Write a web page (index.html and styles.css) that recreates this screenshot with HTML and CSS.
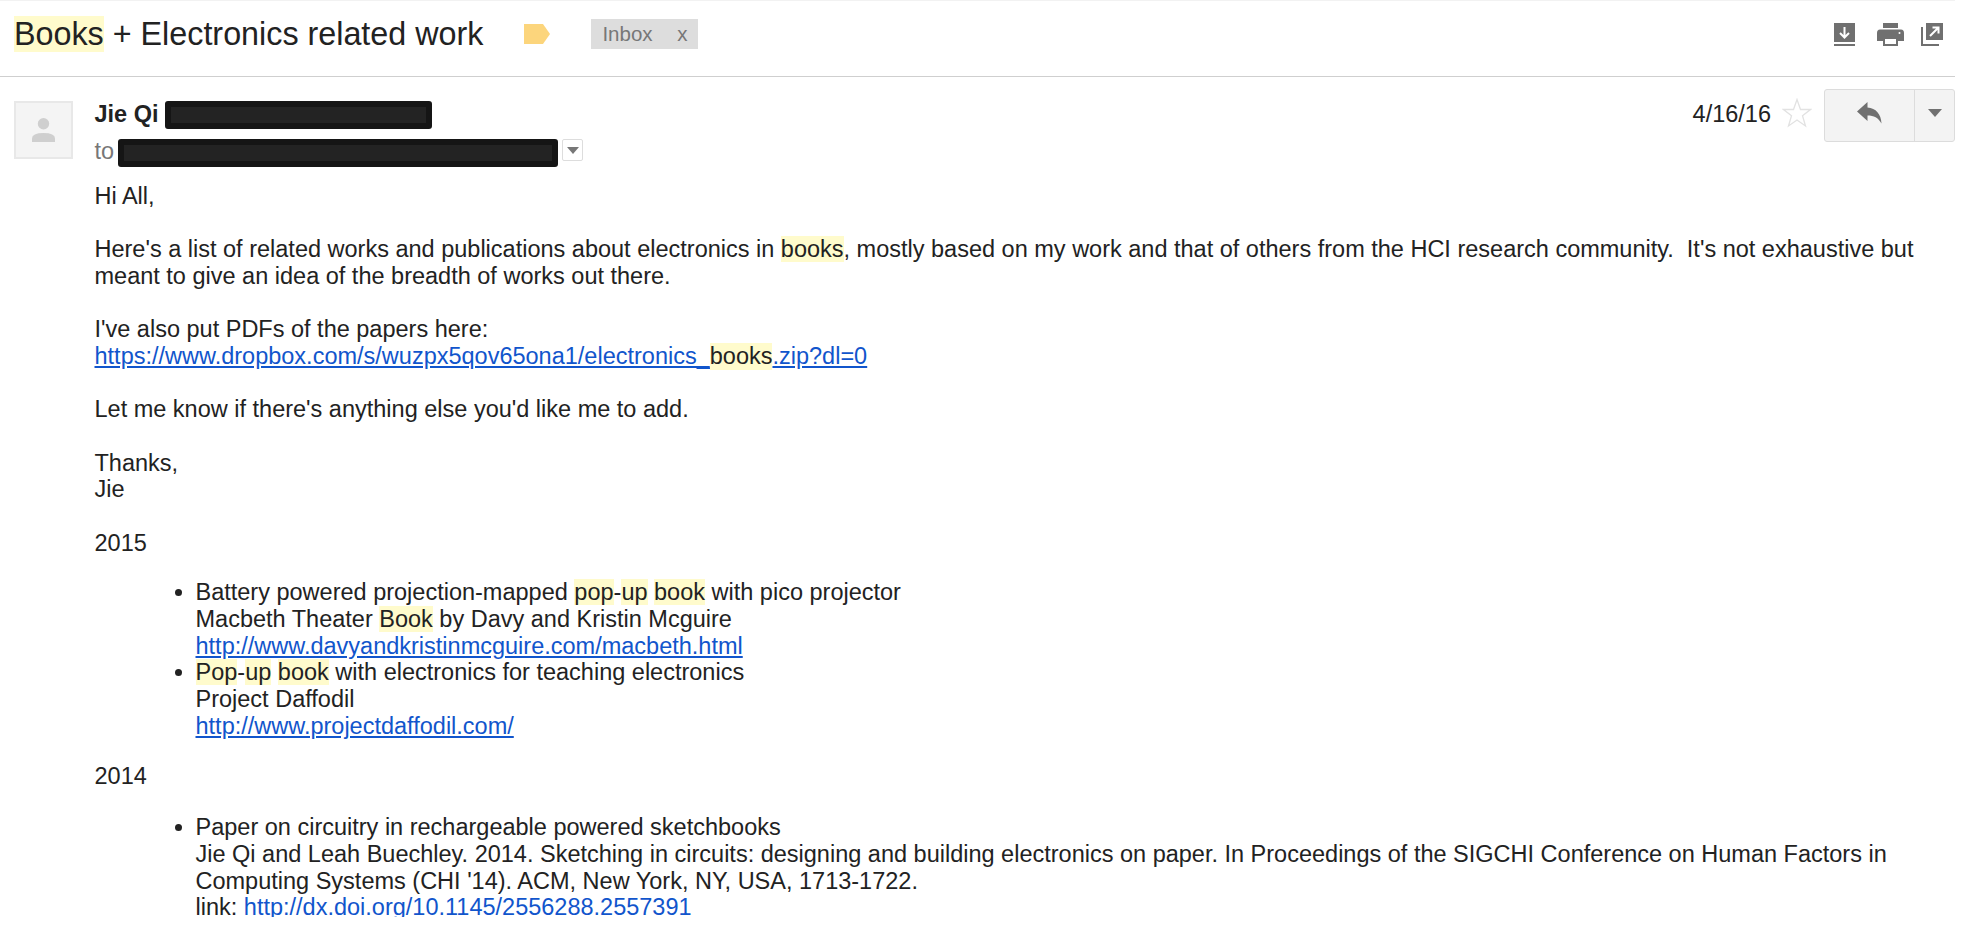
FILE: index.html
```html
<!DOCTYPE html>
<html lang="en">
<head>
  <meta charset="UTF-8" />
  <title>Books + Electronics related work</title>
  <link rel="stylesheet" href="styles.css">
</head>
<body>
  <div class="page">
    <header class="subject-bar">
      <h1 class="subject"><span class="hl">Books</span> + Electronics related work</h1>
      <svg class="label-icon" width="26" height="20" viewBox="0 0 26 20"><path d="M0 0H19L26 10L19 20H0Z" fill="#fcd57c"/></svg>
      <span class="chip"><span>Inbox</span><span>x</span></span>
      <div class="top-icons">
        <svg class="icon-download" width="21" height="23" viewBox="0 0 21 23"><path d="M0 0H21V19H0Z" fill="#707070"/><path d="M0 21H21V23H0Z" fill="#707070"/><path d="M10.500 4V14M6 10L10.500 14.500L15 10" fill="none" stroke="#fff" stroke-width="2"/></svg>
        <svg class="icon-print" width="27" height="23" viewBox="0 0 27 23"><path d="M6 0H21V5H6Z" fill="#707070"/><path d="M3 6.500H24Q27 6.500 27 10V18H21V14H6V18H0V10Q0 6.500 3 6.500Z" fill="#707070"/><path d="M7 15H20V22H7Z" fill="none" stroke="#707070" stroke-width="2"/><circle cx="22.500" cy="10" r="1" fill="#fff"/></svg>
        <svg class="icon-popout" width="22" height="23" viewBox="0 0 22 23"><path d="M5 0H22V17H5Z" fill="#707070"/><path d="M1 4V22H18" fill="none" stroke="#707070" stroke-width="2"/><path d="M9 13L17 5M11.500 4.500H17.500V10.500" fill="none" stroke="#fff" stroke-width="2"/></svg>
      </div>
    </header>

    <section class="message">
      <div class="avatar">
        <svg width="23" height="24" viewBox="0 0 23 24"><circle cx="11.500" cy="5.700" r="5.700" fill="#cfcfcf"/><path d="M0 24V20.500Q0 15 11.500 15Q23 15 23 20.500V24Z" fill="#cfcfcf"/></svg>
      </div>
      <div class="message-main">
        <div class="message-head">
          <div class="people">
            <div class="from"><strong class="from-name">Jie Qi</strong><span class="redact redact-from"></span></div>
            <div class="to"><span class="to-word">to</span><span class="redact redact-to"></span>
              <span class="details-btn"><svg width="12" height="7" viewBox="0 0 12 7"><path d="M0 0H12L6 7Z" fill="#777"/></svg></span>
            </div>
          </div>
          <div class="actions">
            <span class="date">4/16/16</span>
            <svg class="star" width="30" height="30" viewBox="0 0 30 30"><path d="M15 1.500L18.500 11.500H28.500L20.500 17.800L23.500 28L15 22L6.500 28L9.500 17.800L1.500 11.500H11.500Z" fill="#fff" stroke="#e2e2e2" stroke-width="1.300"/></svg>
            <div class="reply-group">
              <span class="reply-btn"><svg width="25" height="22" viewBox="0 0 25 22"><path d="M0 9.500L10.500 0V5.500C19 6 24 12 24.500 21.500C21 15.500 17 13.500 10.500 13.500V19Z" fill="#707070"/></svg></span>
              <span class="more-btn"><svg width="14" height="8" viewBox="0 0 14 8"><path d="M0 0H14L7 8Z" fill="#707070"/></svg></span>
            </div>
          </div>
        </div>

        <div class="body-text">
          <p>Hi All,</p>
          <p>Here's a list of related works and publications about electronics in <span class="hl">books</span>, mostly based on my work and that of others from the HCI research community.&nbsp; It's not exhaustive but meant to give an idea of the breadth of works out there.</p>
          <p>I've also put PDFs of the papers here:<br><a href="#">https://www.dropbox.com/s/wuzpx5qov65ona1/electronics_<span class="hl hl-link">books</span>.zip?dl=0</a></p>
          <p>Let me know if there's anything else you'd like me to add.</p>
          <p>Thanks,<br>Jie</p>
          <p class="year">2015</p>
          <ul>
            <li>Battery powered projection-mapped <span class="hl">pop</span>-<span class="hl">up</span> <span class="hl">book</span> with pico projector<br>Macbeth Theater <span class="hl">Book</span> by Davy and Kristin Mcguire<br><a href="#">http://www.davyandkristinmcguire.com/macbeth.html</a></li>
            <li><span class="hl">Pop</span>-<span class="hl">up</span> <span class="hl">book</span> with electronics for teaching electronics<br>Project Daffodil<br><a href="#">http://www.projectdaffodil.com/</a></li>
          </ul>
          <p class="year year-second">2014</p>
          <ul>
            <li>Paper on circuitry in rechargeable powered sketchbooks<br>Jie Qi and Leah Buechley. 2014. Sketching in circuits: designing and building electronics on paper. In Proceedings of the SIGCHI Conference on Human Factors in Computing Systems (CHI '14). ACM, New York, NY, USA, 1713-1722.<br>link: <a href="#">http://dx.doi.org/10.1145/2556288.2557391</a></li>
          </ul>
        </div>
      </div>
    </section>
  </div>
</body>
</html>
```

FILE: styles.css
```css
body {
  margin: 0;
  background: #fff;
  color: #222;
  font-family: "Liberation Sans", Arial, sans-serif;
  font-size: 23.500px;
  overflow: hidden;
}

.page {
  width: 1955px;
  height: 917px;
  overflow: hidden;
  border-top: 1px solid #f2f2f2;
  box-sizing: border-box;
}

.hl {
  background: #fffbcc;
}

/* subject row */
.subject-bar {
  display: flex;
  align-items: center;
  height: 66px;
  padding: 0 12px 9px 14px;
  border-bottom: 1px solid #cfcfcf;
}

.subject {
  margin: 0;
  font-size: 32.300px;
  font-weight: normal;
}

.label-icon {
  margin-left: 41px;
}

.chip {
  display: flex;
  justify-content: space-between;
  width: 107px;
  height: 30px;
  margin-left: 41px;
  padding: 0 11px;
  box-sizing: border-box;
  background: #ddd;
  color: #777;
  font-size: 20.500px;
  line-height: 30px;
}

.top-icons {
  display: flex;
  align-items: center;
  margin-left: auto;
}

.icon-print {
  margin: 0 17px 0 22px;
}

/* message */
.message {
  display: flex;
  padding: 12px 0 0 14px;
}

.avatar {
  display: flex;
  align-items: center;
  justify-content: center;
  flex: none;
  width: 59px;
  height: 58px;
  margin-top: 12px;
  box-sizing: border-box;
  background: #f4f4f4;
  border: 2px solid #e8e8e8;
}

.message-main {
  flex: 1;
  margin-left: 21.500px;
  min-width: 0;
}

.message-head {
  display: flex;
  justify-content: space-between;
  height: 93.500px;
}

.people {
  padding-top: 12px;
}

.from,
.to {
  display: flex;
  align-items: center;
  height: 28px;
}

.to {
  margin-top: 10px;
  color: #777;
}

.from-name {
  margin-bottom: 2px;
}

.to-word {
  margin-bottom: 4px;
}

.redact {
  box-sizing: border-box;
  height: 28px;
  background: #232323;
  border: 6px solid #151515;
  border-radius: 3px;
}

.redact-from {
  width: 267px;
  margin-left: 6px;
}

.redact-to {
  width: 440px;
  margin-left: 4px;
}

.details-btn {
  display: flex;
  align-items: center;
  justify-content: center;
  align-self: flex-start;
  width: 21px;
  height: 22px;
  margin-left: 4px;
  box-sizing: border-box;
  background: #fff;
  border: 1px solid #ddd;
  border-radius: 2px;
}

.actions {
  display: flex;
  align-items: flex-start;
}

.date {
  margin-top: 12px;
}

.star {
  margin: 9px 0 0 11px;
}

.reply-group {
  display: flex;
  height: 53px;
  margin-left: 12px;
  box-sizing: border-box;
  background: #f3f3f3;
  border: 1px solid #dcdcdc;
  border-radius: 3px;
}

.reply-btn,
.more-btn {
  display: flex;
  align-items: center;
  justify-content: center;
  padding-bottom: 5px;
  box-sizing: border-box;
}

.reply-btn {
  width: 90px;
  border-right: 1px solid #dcdcdc;
}

.more-btn {
  width: 39px;
}

/* mail text */
.body-text {
  line-height: 26.700px;
}

.body-text p {
  margin: 0 0 26.700px;
}

.body-text .year {
  margin-bottom: 22.600px;
}

.body-text .year-second {
  margin-bottom: 24px;
}

.body-text ul {
  margin: 0 0 24px;
  padding-left: 101px;
}

.body-text a {
  color: #15c;
}

.hl-link {
  display: inline-block;
  color: #222;
  line-height: 1.150;
}
```
